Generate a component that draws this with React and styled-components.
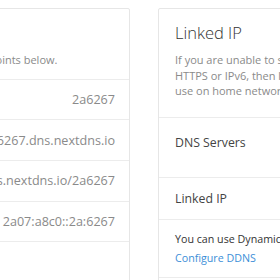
import styled, { createGlobalStyle } from 'styled-components'

const GlobalStyle = createGlobalStyle`
    html, body {
        margin: 0;
        padding: 0;
        background: #fff;
        overflow: hidden;
    }
    body {
        font-family: "Open Sans", "Noto Sans", sans-serif;
        color: #333;
    }
    * {
        box-sizing: border-box;
    }
`

const Page = styled.div`
    display: flex;
    align-items: flex-start;
    gap: 28px;
    margin-left: -210px;
    padding-top: 8px;
    width: 800px;
`

const Card = styled.div`
    width: ${props => props.width}px;
    flex-shrink: 0;
    background: #fff;
    border: 1px solid #e6e6e6;
    border-radius: 2px;
    min-height: 300px;
`

const Header = styled.div`
    padding: 14px 16px ${props => props.bottom}px;
    border-bottom: 1px solid #ececec;
`

const Title = styled.h2`
    margin: 0 0 9px;
    font-size: 16.5px;
    line-height: 20px;
    font-weight: 300;
    color: #333;
`

const Desc = styled.p`
    margin: 0;
    font-size: 11px;
    line-height: 15.7px;
    color: #8a8a8a;
    white-space: nowrap;
`

const Row = styled.div`
    display: flex;
    justify-content: space-between;
    align-items: center;
    height: 40.7px;
    padding: 0 14px 0 16px;
    border-bottom: 1px solid #ececec;
    font-size: 12.6px;
`

const Label = styled.span`
    color: #444;
`

const Value = styled.span`
    color: #8a8a8a;
    white-space: nowrap;
`

const Section = styled.div`
    padding: ${props => props.top}px 16px 0;
    height: ${props => props.height}px;
    border-bottom: 1px solid #ececec;
`

const SectionTitle = styled.div`
    font-size: 12.3px;
    line-height: 18px;
    color: #444;
`

const Note = styled.div`
    font-size: 10.7px;
    line-height: 19px;
    color: #333;
    white-space: nowrap;
`

const Link = styled.a`
    display: block;
    font-size: 10.7px;
    line-height: 19px;
    color: #3d8fd8;
    text-decoration: none;
`

const endpoints = [
    { label: 'ID', value: '2a6267' },
    { label: 'DNS-over-TLS', value: '2a6267.dns.nextdns.io' },
    { label: 'DNS-over-HTTPS', value: 'https://dns.nextdns.io/2a6267' },
    { label: 'IPv6', value: '2a07:a8c0::2a:6267' },
]

const App = () => {
    return (
        <>
            <GlobalStyle />
            <Page>
                <Card width={340}>
                    <Header bottom={11}>
                        <Title>Endpoints</Title>
                        <Desc>Set up your device by using the endpoints below.</Desc>
                    </Header>
                    {endpoints.map(e => (
                        <Row key={e.label}>
                            <Label>{e.label}</Label>
                            <Value>{e.value}</Value>
                        </Row>
                    ))}
                </Card>
                <Card width={340}>
                    <Header bottom={18}>
                        <Title>Linked IP</Title>
                        <Desc>
                            If you are unable to set up NextDNS using DNS-over-TLS, DNS-over-<br />
                            HTTPS or IPv6, then link your IP address below. This is only for<br />
                            use on home networks with a static or dynamic IP.
                        </Desc>
                    </Header>
                    <Section top={16} height={60}>
                        <SectionTitle>DNS Servers</SectionTitle>
                    </Section>
                    <Section top={12} height={42}>
                        <SectionTitle>Linked IP</SectionTitle>
                    </Section>
                    <Section top={10} height={58}>
                        <Note>You can use Dynamic DNS to keep your IP linked automatically.</Note>
                        <Link href="#">Configure DDNS</Link>
                    </Section>
                </Card>
            </Page>
        </>
    )
}

export default App
